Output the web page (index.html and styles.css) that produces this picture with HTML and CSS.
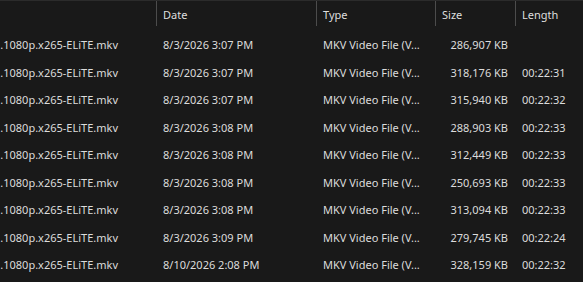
FILE: index.html
```html
<!DOCTYPE html>
<html lang="en">
<head>
    <meta charset="UTF-8">
    <title>Files</title>
    <link rel="stylesheet" href="styles.css">
</head>
<body>
    <div class="list">
        <div class="head">
            <div class="col name"></div>
            <div class="col date"><span class="label">Date</span></div>
            <div class="col type"><span class="label">Type</span></div>
            <div class="col size"><span class="label">Size</span></div>
            <div class="col length"><span class="label">Length</span></div>
        </div>

        <div class="row">
            <div class="col name">.1080p.x265-ELiTE.mkv</div>
            <div class="col date">8/3/2026 3:07 PM</div>
            <div class="col type">MKV Video File (V...</div>
            <div class="col size">286,907 KB</div>
            <div class="col length"></div>
        </div>
        <div class="row">
            <div class="col name">.1080p.x265-ELiTE.mkv</div>
            <div class="col date">8/3/2026 3:07 PM</div>
            <div class="col type">MKV Video File (V...</div>
            <div class="col size">318,176 KB</div>
            <div class="col length">00:22:31</div>
        </div>
        <div class="row">
            <div class="col name">.1080p.x265-ELiTE.mkv</div>
            <div class="col date">8/3/2026 3:07 PM</div>
            <div class="col type">MKV Video File (V...</div>
            <div class="col size">315,940 KB</div>
            <div class="col length">00:22:32</div>
        </div>
        <div class="row">
            <div class="col name">.1080p.x265-ELiTE.mkv</div>
            <div class="col date">8/3/2026 3:08 PM</div>
            <div class="col type">MKV Video File (V...</div>
            <div class="col size">288,903 KB</div>
            <div class="col length">00:22:33</div>
        </div>
        <div class="row">
            <div class="col name">.1080p.x265-ELiTE.mkv</div>
            <div class="col date">8/3/2026 3:08 PM</div>
            <div class="col type">MKV Video File (V...</div>
            <div class="col size">312,449 KB</div>
            <div class="col length">00:22:33</div>
        </div>
        <div class="row">
            <div class="col name">.1080p.x265-ELiTE.mkv</div>
            <div class="col date">8/3/2026 3:08 PM</div>
            <div class="col type">MKV Video File (V...</div>
            <div class="col size">250,693 KB</div>
            <div class="col length">00:22:33</div>
        </div>
        <div class="row">
            <div class="col name">.1080p.x265-ELiTE.mkv</div>
            <div class="col date">8/3/2026 3:08 PM</div>
            <div class="col type">MKV Video File (V...</div>
            <div class="col size">313,094 KB</div>
            <div class="col length">00:22:33</div>
        </div>
        <div class="row">
            <div class="col name">.1080p.x265-ELiTE.mkv</div>
            <div class="col date">8/3/2026 3:09 PM</div>
            <div class="col type">MKV Video File (V...</div>
            <div class="col size">279,745 KB</div>
            <div class="col length">00:22:24</div>
        </div>
        <div class="row">
            <div class="col name">.1080p.x265-ELiTE.mkv</div>
            <div class="col date">8/10/2026 2:08 PM</div>
            <div class="col type">MKV Video File (V...</div>
            <div class="col size">328,159 KB</div>
            <div class="col length">00:22:32</div>
        </div>
    </div>
</body>
</html>
```

FILE: styles.css
```css
body {
    margin: 0;
    padding: 0;
    background-color: #191919;
    color: #dcdcdc;
    font-family: "Noto Sans", "Open Sans", sans-serif;
    font-size: 11px;
    overflow: hidden;
}
.list {
    border-top: 1px solid #2b2b2b;
}
.head {
    display: flex;
    height: 25px;
    margin-bottom: 5px;
}
.head .col {
    display: flex;
    align-items: center;
    padding-top: 2px;
    box-sizing: border-box;
    border-right: 1px solid #4c4c4c;
    color: #dedede;
}
.row {
    display: flex;
    height: 27.5px;
    align-items: center;
}
.col {
    flex-shrink: 0;
    box-sizing: border-box;
    white-space: nowrap;
    overflow: hidden;
}
.name {
    width: 157px;
    text-align: right;
    padding-right: 39px;
}
.date {
    width: 160px;
    padding-left: 6px;
}
.type {
    width: 119px;
    padding-left: 6px;
}
.size {
    width: 80px;
    padding-left: 6px;
    padding-right: 8px;
    text-align: right;
}
.length {
    flex: 1;
    padding-left: 6px;
}
.head .length {
    flex: none;
    width: 80px;
    border-right: none;
}
```
